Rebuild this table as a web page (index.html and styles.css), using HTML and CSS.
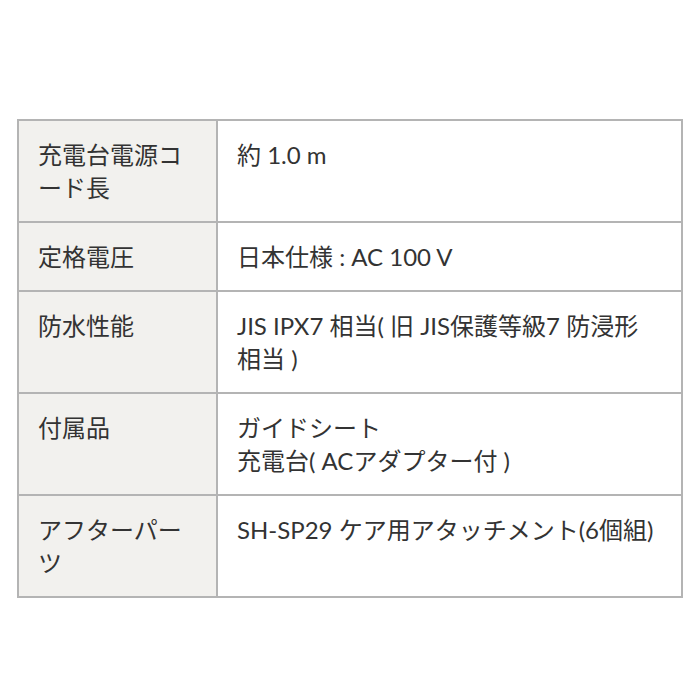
FILE: index.html
```html
<!DOCTYPE html>
<html lang="ja">
<head>
<meta charset="utf-8">
<link rel="stylesheet" href="styles.css">
</head>
<body>
<div class="page">
  <table class="spec">
    <tr><th>充電台電源コード長</th><td>約 1.0 m</td></tr>
    <tr><th>定格電圧</th><td>日本仕様 : AC 100 V</td></tr>
    <tr><th>防水性能</th><td>JIS IPX7 相当( 旧 JIS保護等級7 防浸形<span class="keep">相当 )</span></td></tr>
    <tr><th>付属品</th><td>ガイドシート<br>充電台( ACアダプター付 )</td></tr>
    <tr><th>アフターパーツ</th><td>SH-SP29 ケア用アタッチメント(6個組)</td></tr>
  </table>
</div>
</body>
</html>
```

FILE: styles.css
```css
html, body {
  margin: 0;
  padding: 0;
  background: #ffffff;
}
.page {
  padding: 119px 17px 0 17px;
}
.spec {
  width: 666px;
  border-collapse: collapse;
  font-family: "Lato", "Noto Sans CJK JP", sans-serif;
  font-size: 24px;
  line-height: 33px;
  color: #333333;
}
.spec th, .spec td {
  border: 2px solid #b4b4b4;
  padding: 17px 18px 17px 19px;
  text-align: left;
  vertical-align: top;
  font-weight: normal;
}
.spec th {
  width: 160px;
  background: #f2f1ee;
}
.spec td {
  background: #ffffff;
}
.keep {
  white-space: nowrap;
}
```
